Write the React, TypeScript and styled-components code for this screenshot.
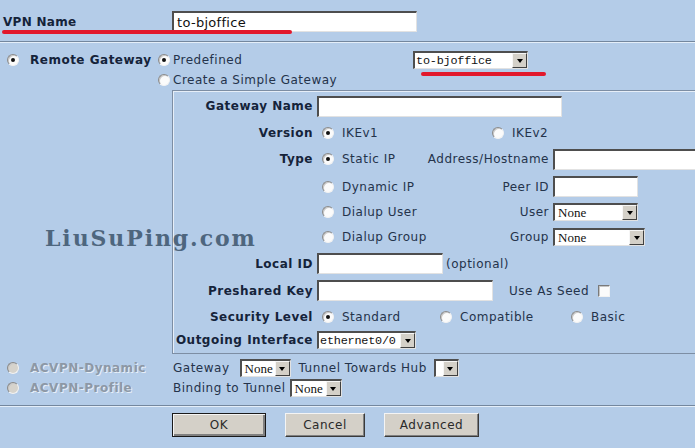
import styled, { createGlobalStyle } from "styled-components";

const GlobalStyle = createGlobalStyle`
  html, body {
    margin: 0;
    padding: 0;
    background: #b4cce8;
  }
  body {
    font-family: "DejaVu Sans", Verdana, sans-serif;
    font-size: 12px;
    letter-spacing: 0.5px;
    color: #24334b;
  }
`;

const Page = styled.div`
  position: relative;
  width: 695px;
  height: 448px;
  overflow: hidden;
  background: #b4cce8;
`;

const NameRow = styled.div`
  display: flex;
  align-items: center;
  padding: 11px 0 9px;
`;

const NameLabel = styled.div`
  width: 172px;
  padding-left: 3px;
  box-sizing: border-box;
  font-weight: bold;
  letter-spacing: 0.3px;
  color: #15233a;
`;

const Divider = styled.div`
  height: 1px;
  background: #74879e;
  border-bottom: 1px solid #e4eef9;
`;

const GatewayGrid = styled.div`
  display: grid;
  grid-template-columns: 158px 255px auto;
  grid-template-rows: 24px 16px;
  align-items: center;
  padding-top: 5px;
  margin-bottom: 2px;
`;

const Cell = styled.div<{ $pad?: number; $span?: string }>`
  display: flex;
  align-items: center;
  padding-left: ${(p) => p.$pad ?? 0}px;
  grid-column: ${(p) => p.$span ?? "auto"};
`;

const BoldText = styled.span<{ $disabled?: boolean }>`
  font-weight: bold;
  letter-spacing: 0.5px;
  white-space: nowrap;
  color: ${(p) => (p.$disabled ? "#8d98a6" : "#15233a")};
  text-shadow: ${(p) => (p.$disabled ? "1px 1px 0 #e6eef8" : "none")};
`;

const Text = styled.span<{ $ml?: number }>`
  white-space: nowrap;
  margin-left: ${(p) => p.$ml ?? 0}px;
`;

const Radio = styled.span<{ $checked?: boolean; $disabled?: boolean; $gap?: number }>`
  position: relative;
  flex: none;
  width: 12px;
  height: 12px;
  box-sizing: border-box;
  border-radius: 50%;
  margin-right: ${(p) => p.$gap ?? 8}px;
  background: ${(p) => (p.$disabled ? "#d6d3cc" : "#fbfbfb")};
  border: 1px solid;
  border-color: #8a8a8a #f2f2f2 #f2f2f2 #8a8a8a;
  box-shadow: inset 1px 1px 0 #c9c9c9;
  &::after {
    content: "";
    display: ${(p) => (p.$checked ? "block" : "none")};
    position: absolute;
    left: 3px;
    top: 3px;
    width: 4px;
    height: 4px;
    border-radius: 50%;
    background: #111;
  }
`;

const Input = styled.div<{ $w: number }>`
  flex: none;
  width: ${(p) => p.$w}px;
  height: 21px;
  box-sizing: border-box;
  background: #fff;
  border-style: solid;
  border-width: 2px 1px 1px 2px;
  border-color: #4e4e4e #e2e2e2 #e2e2e2 #4e4e4e;
  padding: 0 3px;
  display: flex;
  align-items: center;
  font-size: 13px;
  letter-spacing: 0.3px;
  color: #111;
`;

const SelectBox = styled.div<{ $w: number; $h?: number }>`
  flex: none;
  display: flex;
  width: ${(p) => p.$w}px;
  height: ${(p) => p.$h ?? 18}px;
  box-sizing: border-box;
  background: #fff;
  border-style: solid;
  border-width: 2px 1px 1px 2px;
  border-color: #4e4e4e #e2e2e2 #e2e2e2 #4e4e4e;
`;

const SelectValue = styled.span<{ $kind: "mono" | "serif" }>`
  flex: 1;
  display: flex;
  align-items: center;
  padding-left: ${(p) => (p.$kind === "mono" ? 1 : 3)}px;
  overflow: hidden;
  white-space: nowrap;
  letter-spacing: ${(p) => (p.$kind === "mono" ? "-0.2px" : "0")};
  color: #111;
  font-family: ${(p) =>
    p.$kind === "mono" ? '"Liberation Mono", monospace' : '"Liberation Serif", serif'};
  font-size: ${(p) => (p.$kind === "mono" ? "11.8px" : "13px")};
`;

const Arrow = styled.span`
  flex: none;
  width: 15px;
  box-sizing: border-box;
  background: #d4d0c8;
  border: 1px solid;
  border-color: #f6f6f6 #404040 #404040 #f6f6f6;
  display: flex;
  align-items: center;
  justify-content: center;
  &::after {
    content: "";
    border-left: 3.5px solid transparent;
    border-right: 3.5px solid transparent;
    border-top: 4px solid #000;
  }
`;

const Select = ({
  w,
  h,
  value,
  kind = "serif",
}: {
  w: number;
  h?: number;
  value?: string;
  kind?: "mono" | "serif";
}) => (
  <SelectBox $w={w} $h={h}>
    <SelectValue $kind={kind}>{value}</SelectValue>
    <Arrow />
  </SelectBox>
);

const GatewayBox = styled.div`
  margin-left: 172px;
  width: 560px;
  height: 264px;
  box-sizing: border-box;
  border: 1px solid #7d8ea4;
  box-shadow: inset 1px 1px 0 #e6eef8;
  padding-top: 1px;
`;

const BoxRow = styled.div<{ $h: number }>`
  display: grid;
  grid-template-columns: 144px 1fr;
  align-items: center;
  height: ${(p) => p.$h}px;
`;

const FieldLabel = styled.div`
  text-align: right;
  padding-right: 4px;
  font-weight: bold;
  letter-spacing: 0.5px;
  white-space: nowrap;
  color: #15233a;
`;

const Content = styled.div<{ $ml?: number }>`
  display: flex;
  align-items: center;
  margin-left: ${(p) => p.$ml ?? 0}px;
`;

const Option = styled.div<{ $w?: number }>`
  flex: none;
  display: flex;
  align-items: center;
  padding-left: 5px;
  box-sizing: border-box;
  width: ${(p) => (p.$w ? `${p.$w}px` : "auto")};
  white-space: nowrap;
`;

const SubLabel = styled.div`
  flex: none;
  width: 126px;
  box-sizing: border-box;
  padding-right: 4px;
  text-align: right;
  white-space: nowrap;
`;

const Checkbox = styled.span`
  flex: none;
  width: 12px;
  height: 12px;
  margin-left: 9px;
  box-sizing: border-box;
  background: #fbfbfb;
  border: 1px solid;
  border-color: #7a7a7a #f2f2f2 #f2f2f2 #7a7a7a;
  box-shadow: inset 1px 1px 0 #c4c4c4;
`;

const AcvpnSection = styled.div`
  padding: 4px 0 7px;
`;

const AcvpnRow = styled.div`
  display: grid;
  grid-template-columns: 173px 1fr;
  align-items: center;
  height: 20px;
`;

const ButtonBar = styled.div`
  display: flex;
  gap: 19px;
  padding: 6px 0 0 172px;
`;

const Button = styled.div<{ $w: number; $default?: boolean }>`
  width: ${(p) => p.$w}px;
  height: 24px;
  box-sizing: border-box;
  display: flex;
  align-items: center;
  justify-content: center;
  background: #d4d0c8;
  color: #2a2a2a;
  border: 1px solid;
  border-color: ${(p) =>
    p.$default ? "#1a1a1a" : "#f4f4f4 #3a3a3a #3a3a3a #f4f4f4"};
  box-shadow: ${(p) =>
    p.$default
      ? "inset 1px 1px 0 #f4f4f4, inset -2px -2px 0 #808080"
      : "inset -1px -1px 0 #808080"};
`;

const Mark = styled.div<{ $x: number; $y: number; $w: number }>`
  position: absolute;
  left: ${(p) => p.$x}px;
  top: ${(p) => p.$y}px;
  width: ${(p) => p.$w}px;
  height: 4px;
  border-radius: 2px;
  background: #e2182c;
`;

const Watermark = styled.div`
  position: absolute;
  left: 45px;
  top: 225px;
  font-family: "DejaVu Serif", serif;
  font-weight: bold;
  font-size: 22px;
  letter-spacing: 1.9px;
  color: #4e667e;
`;

export default function App() {
  return (
    <Page>
      <GlobalStyle />
      <NameRow>
        <NameLabel>VPN Name</NameLabel>
        <Input $w={245}>to-bjoffice</Input>
      </NameRow>
      <Divider />

      <GatewayGrid>
        <Cell $pad={7}>
          <Radio $checked $gap={11} />
          <BoldText>Remote Gateway</BoldText>
        </Cell>
        <Cell>
          <Radio $checked $gap={3} />
          <Text>Predefined</Text>
        </Cell>
        <Cell>
          <Select w={115} value="to-bjoffice" kind="mono" />
        </Cell>
        <Cell $span="2 / 4">
          <Radio $gap={3} />
          <Text>Create a Simple Gateway</Text>
        </Cell>
      </GatewayGrid>

      <GatewayBox>
        <BoxRow $h={28}>
          <FieldLabel>Gateway Name</FieldLabel>
          <Content>
            <Input $w={245} />
          </Content>
        </BoxRow>
        <BoxRow $h={26}>
          <FieldLabel>Version</FieldLabel>
          <Content>
            <Option $w={170}>
              <Radio $checked />
              IKEv1
            </Option>
            <Option>
              <Radio />
              IKEv2
            </Option>
          </Content>
        </BoxRow>
        <BoxRow $h={26}>
          <FieldLabel>Type</FieldLabel>
          <Content>
            <Option $w={110}>
              <Radio $checked />
              Static IP
            </Option>
            <SubLabel>Address/Hostname</SubLabel>
            <Input $w={160} />
          </Content>
        </BoxRow>
        <BoxRow $h={29}>
          <div />
          <Content>
            <Option $w={110}>
              <Radio />
              Dynamic IP
            </Option>
            <SubLabel>Peer ID</SubLabel>
            <Input $w={85} />
          </Content>
        </BoxRow>
        <BoxRow $h={22}>
          <div />
          <Content>
            <Option $w={110}>
              <Radio />
              Dialup User
            </Option>
            <SubLabel>User</SubLabel>
            <Select w={85} value="None" />
          </Content>
        </BoxRow>
        <BoxRow $h={28}>
          <div />
          <Content>
            <Option $w={110}>
              <Radio />
              Dialup Group
            </Option>
            <SubLabel>Group</SubLabel>
            <Select w={92} value="None" />
          </Content>
        </BoxRow>
        <BoxRow $h={25}>
          <FieldLabel>Local ID</FieldLabel>
          <Content>
            <Input $w={126} />
            <Text $ml={3}>(optional)</Text>
          </Content>
        </BoxRow>
        <BoxRow $h={29}>
          <FieldLabel>Preshared Key</FieldLabel>
          <Content>
            <Input $w={176} />
            <Text $ml={16}>Use As Seed</Text>
            <Checkbox />
          </Content>
        </BoxRow>
        <BoxRow $h={24}>
          <FieldLabel>Security Level</FieldLabel>
          <Content>
            <Option $w={118}>
              <Radio $checked />
              Standard
            </Option>
            <Option $w={131}>
              <Radio />
              Compatible
            </Option>
            <Option>
              <Radio />
              Basic
            </Option>
          </Content>
        </BoxRow>
        <BoxRow $h={22}>
          <FieldLabel>Outgoing Interface</FieldLabel>
          <Content>
            <Select w={99} value="ethernet0/0" kind="mono" />
          </Content>
        </BoxRow>
      </GatewayBox>

      <AcvpnSection>
        <AcvpnRow>
          <Cell $pad={7}>
            <Radio $disabled $gap={11} />
            <BoldText $disabled>ACVPN-Dynamic</BoldText>
          </Cell>
          <Content>
            <Text>Gateway</Text>
            <Content $ml={10}>
              <Select w={51} value="None" />
            </Content>
            <Text $ml={8}>Tunnel Towards Hub</Text>
            <Content $ml={7}>
              <Select w={25} />
            </Content>
          </Content>
        </AcvpnRow>
        <AcvpnRow>
          <Cell $pad={7}>
            <Radio $disabled $gap={11} />
            <BoldText $disabled>ACVPN-Profile</BoldText>
          </Cell>
          <Content>
            <Text>Binding to Tunnel</Text>
            <Content $ml={4}>
              <Select w={52} value="None" />
            </Content>
          </Content>
        </AcvpnRow>
      </AcvpnSection>
      <Divider />

      <ButtonBar>
        <Button $w={94} $default>
          OK
        </Button>
        <Button $w={80}>Cancel</Button>
        <Button $w={95}>Advanced</Button>
      </ButtonBar>

      <Watermark>LiuSuPing.com</Watermark>
      <Mark $x={2} $y={30} $w={290} />
      <Mark $x={421} $y={72} $w={125} />
    </Page>
  );
}
